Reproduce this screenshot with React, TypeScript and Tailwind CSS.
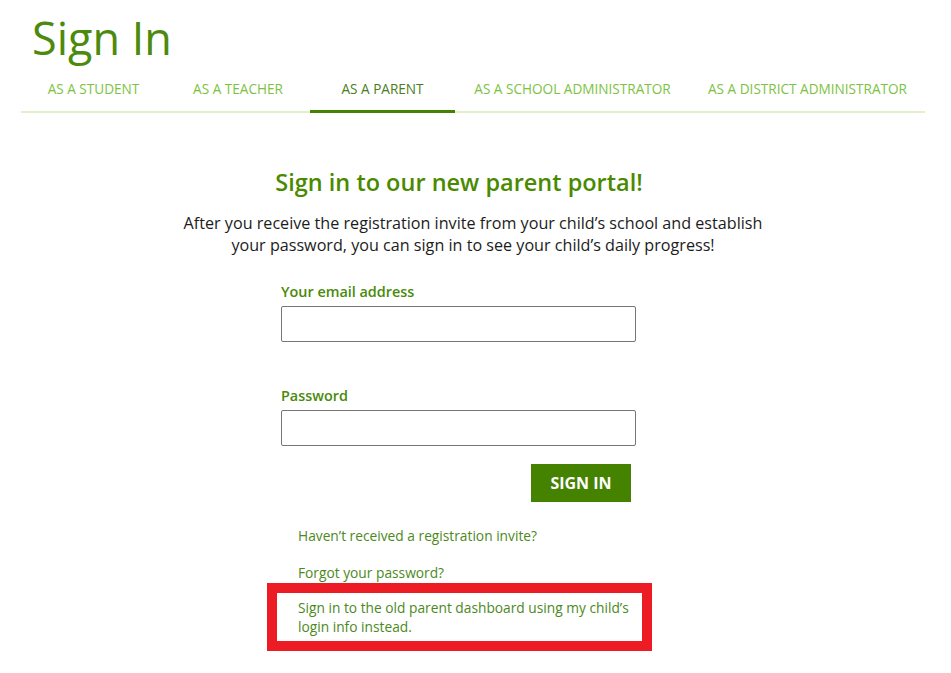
const tabs = [
  { label: 'AS A STUDENT', w: 'w-[145px]' },
  { label: 'AS A TEACHER', w: 'w-[144px]' },
  { label: 'AS A PARENT', w: 'w-[145px]', active: true },
  { label: 'AS A SCHOOL ADMINISTRATOR', w: 'w-[235px]' },
  { label: 'AS A DISTRICT ADMINISTRATOR', w: 'w-[235px]' },
];

export default function App() {
  return (
    <div className="min-h-[673px] bg-white font-['Open_Sans',sans-serif]">
      <div className="ml-[21px] w-[904px]">
        <h1 className="pt-[14px] pl-[11px] text-[45px] leading-[48px] font-normal text-[#4b8a0c]">Sign In</h1>

        <div className="flex border-b-2 border-[#dff0cb]">
          {tabs.map(t => (
            <div
              key={t.label}
              className={`${t.w} -mb-[2px] pt-[17px] pb-[11px] border-b-[3px] text-center text-[13.6px] leading-[20px] ${
                t.active ? 'border-[#458200] text-[#4a7d1c]' : 'border-transparent text-[#7cc242]'
              }`}
            >
              {t.label}
            </div>
          ))}
        </div>

        <div className="pt-[53px] text-center">
          <h2 className="pr-[28px] text-[23.5px] leading-[32px] font-semibold text-[#4a8a00]">Sign in to our new parent portal!</h2>
          <p className="mt-[14px] text-[16.15px] leading-[22px] text-[#1c1c1c]">
            After you receive the registration invite from your child’s school and establish
            <br />
            your password, you can sign in to see your child’s daily progress!
          </p>
        </div>

        <div className="ml-[260px] w-[355px] mt-[25px]">
          <label className="block text-[14.4px] leading-[22px] font-semibold text-[#4a8a0a]">Your email address</label>
          <input type="text" className="mt-[3px] block w-[355px] h-[36px] border border-[#767676] rounded-[2px] bg-white" />

          <label className="mt-[43px] block text-[14.4px] leading-[22px] font-semibold text-[#4a8a0a]">Password</label>
          <input type="password" className="mt-[3px] block w-[355px] h-[36px] border border-[#767676] rounded-[2px] bg-white" />

          <div className="mt-[18px] flex justify-end pr-[5px]">
            <button className="w-[100px] h-[38px] bg-[#458200] text-white text-[16px] font-bold">SIGN IN</button>
          </div>

          <div className="mt-[24px] ml-[17px] flex flex-col gap-[17px] text-[13.75px] leading-[20px] text-[#4c891c]">
            <a>Haven’t received a registration invite?</a>
            <a>Forgot your password?</a>
          </div>

          <div className="-ml-[14px] w-[385px] border-[10px] border-[#ed1c24] pl-[21px] pt-[5px] pb-[5px] text-[13.75px] leading-[19px] text-[#4c891c]">
            Sign in to the old parent dashboard using my child’s
            <br />
            login info instead.
          </div>
        </div>
      </div>
    </div>
  );
}
